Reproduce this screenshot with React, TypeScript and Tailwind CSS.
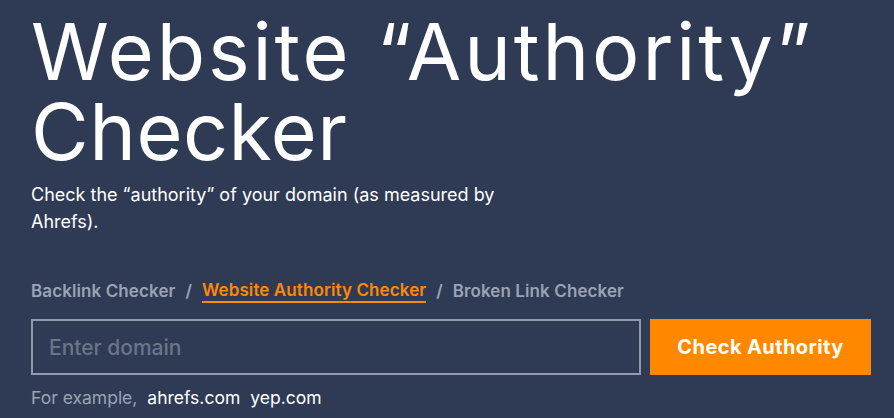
export default function App() {
  return (
    <div
      className="w-[894px] h-[418px] overflow-hidden bg-[#2f3b55] text-white"
      style={{ fontFamily: 'Inter, "Noto Sans", sans-serif' }}
    >
      <div className="pl-[31px] pt-[11px]">
        <h1 className="text-[79px] leading-[80px] font-normal text-white whitespace-nowrap">
          <span className="tracking-[2.9px]">Website “Authority”</span>
          <br />
          <span className="tracking-[0.5px]">Checker</span>
        </h1>
        <p className="mt-[10px] w-[490px] text-[18px] leading-[27px] text-white">
          Check the “authority” of your domain (as measured by Ahrefs).
        </p>
        <nav className="mt-[44px] flex items-center gap-[10px] text-[17px] font-semibold tracking-[0.1px] text-[#9aa3b3]">
          <span className="leading-[24px]">Backlink Checker</span>
          <span className="leading-[24px]">/</span>
          <span className="text-[#ff8800] border-b-2 border-[#ff8800] leading-[22px]">
            Website Authority Checker
          </span>
          <span className="leading-[24px]">/</span>
          <span className="leading-[24px]">Broken Link Checker</span>
        </nav>
        <div className="mt-[16px] flex gap-[9px]">
          <input
            className="w-[610px] h-[56px] border-2 border-[#8f9aac] bg-transparent px-[16px] text-[21px] font-medium text-white placeholder-[#6b7588] outline-none"
            placeholder="Enter domain"
          />
          <button className="w-[221px] h-[56px] bg-[#ff8800] text-[20px] font-bold tracking-[0.4px] text-white">
            Check Authority
          </button>
        </div>
        <div className="mt-[11px] flex gap-[10px] text-[17.5px] leading-[24px]">
          <span className="text-[#9aa3b3]">For example,</span>
          <span className="text-white">ahrefs.com</span>
          <span className="text-white">yep.com</span>
        </div>
      </div>
    </div>
  );
}
